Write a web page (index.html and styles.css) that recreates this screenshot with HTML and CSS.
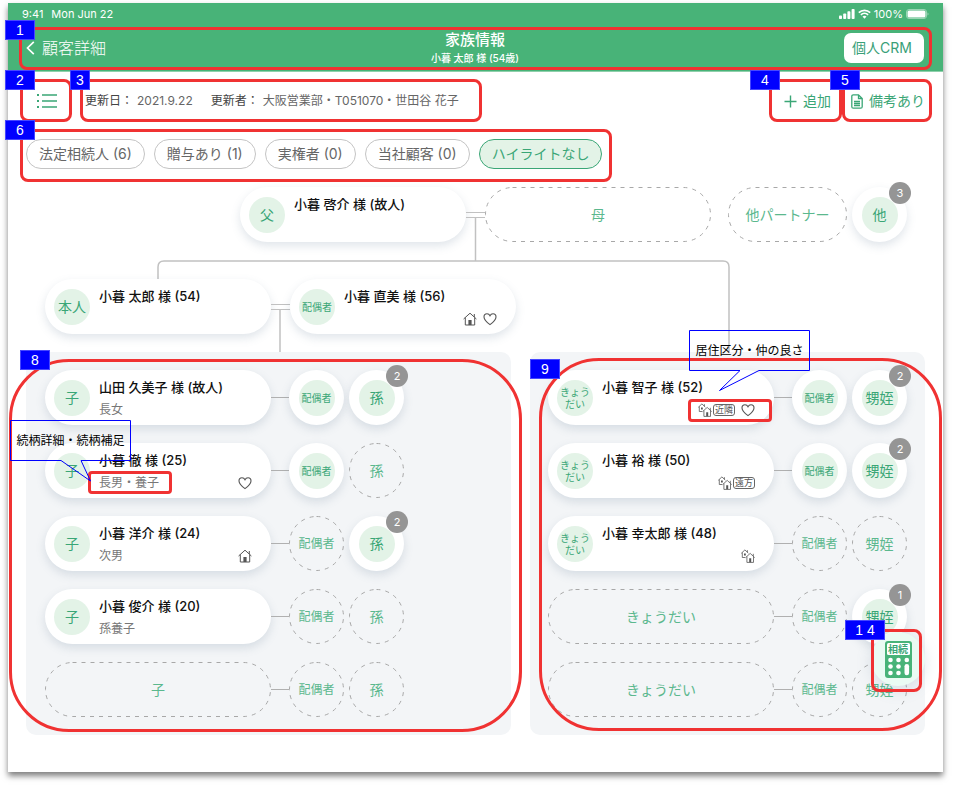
FILE: index.html
```html
<!DOCTYPE html>
<html lang="ja">
<head>
<meta charset="utf-8">
<meta name="viewport" content="width=device-width, initial-scale=1">
<title>家族情報</title>
<link rel="stylesheet" href="styles.css">
</head>
<body>
<svg class="sprite" aria-hidden="true">
  <symbol id="house" viewBox="0 0 14 14"><path d="M.6 7 7 1.200 13.400 7M2.300 5.600V13h9.400V5.600M11.300 5V2" fill="none" stroke="currentColor"/><path d="M5.400 8h3.200v5H5.400z" fill="currentColor"/></symbol>
  <symbol id="heart" viewBox="0 0 14 14"><path d="M7 12.600C3.600 10 1 7.700 1 4.900 1 3 2.300 1.700 4 1.700c1.300 0 2.400.7 3 2 .6-1.300 1.700-2 3-2 1.700 0 3 1.300 3 3.200 0 2.800-2.600 5.100-6 7.700z" fill="none" stroke="currentColor" stroke-width="1.100"/></symbol>
  <symbol id="houses" viewBox="0 0 14 14"><path d="M.3 4.300 3.900.9l3.400 3.200M1.300 3.500v5h3M6.400 3.300V1.200M4.600 8.600l4.600-4.200 4.500 4.200M5.900 7.500v5.900h6.600V7.500M12.300 7V4.800" fill="none" stroke="currentColor" stroke-width=".8"/><path d="M3 4.600h1.800v1.900H3zM8.200 9.200h2v4h-2z" fill="currentColor"/></symbol>
</svg>
<main class="screen">
  <header class="header">
    <div class="status">
      <span class="status-time"><span>9:41</span><span>Mon Jun 22</span></span>
      <span class="status-right">
        <svg width="16" height="10" viewBox="0 0 16 10" fill="#fff"><rect y="6.500" width="3" height="3.500" rx=".8"/><rect x="4.200" y="4.500" width="3" height="5.500" rx=".8"/><rect x="8.400" y="2.300" width="3" height="7.700" rx=".8"/><rect x="12.600" width="3" height="10" rx=".8"/></svg>
        <svg width="13" height="10" viewBox="0 0 13 10" fill="none" stroke="#fff" stroke-width="1.700"><path d="M.8 3.600a8.200 8.200 0 0 1 11.400 0M2.900 5.900a5.200 5.200 0 0 1 7.200 0"/><path d="M4.500 7.600a3 3 0 0 1 4 0L6.500 9.700z" fill="#fff" stroke="none"/></svg>
        <span>100%</span>
        <svg width="23" height="10" viewBox="0 0 23 10"><rect x=".5" y=".5" width="20" height="9" rx="2.500" fill="none" stroke="#9ad5b4"/><rect x="1.500" y="1.500" width="18" height="7" rx="1.500" fill="#fff"/><path d="M21.500 3.500v3q1-.4 1-1.500t-1-1.500" fill="#9ad5b4"/></svg>
      </span>
    </div>
    <nav class="nav">
      <button class="back"><svg width="9" height="14" viewBox="0 0 9 14" fill="none" stroke="#fff" stroke-width="1.700"><path d="M7.800.8 1.500 7l6.300 6.200"/></svg>顧客詳細</button>
      <div class="heading"><h1>家族情報</h1><p>小暮 太郎 様 (54歳)</p></div>
      <button class="crm">個人CRM</button>
    </nav>
  </header>

  <section class="toolbar">
    <button class="list" aria-label="一覧"><svg width="20" height="16" viewBox="0 0 20 16" stroke="currentColor" stroke-width="1.500" fill="none"><path d="M5 2h15M5 8h15M5 14h15"/><path d="M0 2h2M0 8h2M0 14h2" stroke-width="2"/></svg></button>
    <dl class="meta">
      <div><dt>更新日：</dt><dd>2021.9.22</dd></div>
      <div><dt>更新者：</dt><dd>大阪営業部・T051070・世田谷 花子</dd></div>
    </dl>
    <button class="action"><svg width="13" height="13" viewBox="0 0 13 13" stroke="currentColor" stroke-width="1.400"><path d="M6.500.5v12M.5 6.500h12"/></svg>追加</button>
    <button class="action action-note"><svg width="12" height="15" viewBox="0 0 12 15" fill="none" stroke="currentColor" stroke-width="1.300"><path d="M7.500.8H2.300Q.8.8.8 2.300v10.400q0 1.500 1.500 1.500h7.400q1.500 0 1.500-1.500V4.500zV4.500h3.700M3 7.500h6M3 9.500h6M3 11.500h6"/></svg>備考あり</button>
  </section>

  <section class="chips">
    <button class="chip">法定相続人 (6)</button>
    <button class="chip">贈与あり (1)</button>
    <button class="chip">実権者 (0)</button>
    <button class="chip">当社顧客 (0)</button>
    <button class="chip chip-on">ハイライトなし</button>
  </section>

  <section class="tree">
    <svg class="lines" width="899" height="165" fill="none" stroke="#c1c1c1" stroke-width="1.500"><path d="M132 92V80q0-6 6-6H697q6 0 6 6v85M449.500 30v44M254 122v43"/></svg>
    <div class="row row-parents">
      <div class="row">
        <button class="card"><span class="avatar">父</span><span class="body"><b>小暮 啓介 様 (故人)</b></span></button>
        <span class="tie"></span>
        <button class="empty"><svg class="dash"><rect rx="27"/></svg>母</button>
      </div>
      <div class="row row-gap">
        <button class="empty empty-partner"><svg class="dash"><rect rx="27"/></svg>他パートナー</button>
        <button class="round"><span class="avatar">他</span><span class="badge">3</span></button>
      </div>
    </div>
    <div class="row row-self">
      <button class="card"><span class="avatar">本人</span><span class="body"><b>小暮 太郎 様 (54)</b></span></button>
      <span class="tie"></span>
      <button class="card"><span class="avatar avatar-small">配偶者</span><span class="body"><b>小暮 直美 様 (56)</b><span class="detail"><span class="icons"><svg><use href="#house"/></svg><svg><use href="#heart"/></svg></span></span></span></button>
    </div>
  </section>

  <section class="panels">
    <div class="panel panel-children">
      <div class="row">
        <button class="card"><span class="avatar">子</span><span class="body"><b>山田 久美子 様 (故人)</b><span class="detail">長女</span></span></button>
        <span class="link"></span>
        <button class="round"><span class="avatar avatar-small">配偶者</span></button>
        <button class="round"><span class="avatar">孫</span><span class="badge">2</span></button>
      </div>
      <div class="row">
        <button class="card"><span class="avatar">子</span><span class="body"><b>小暮 徹 様 (25)</b><span class="detail">長男・養子<span class="icons"><svg><use href="#heart"/></svg></span></span></span></button>
        <span class="link"></span>
        <button class="round"><span class="avatar avatar-small">配偶者</span></button>
        <button class="empty empty-round"><svg class="dash"><rect rx="27"/></svg>孫</button>
      </div>
      <div class="row">
        <button class="card"><span class="avatar">子</span><span class="body"><b>小暮 洋介 様 (24)</b><span class="detail">次男<span class="icons"><svg><use href="#house"/></svg></span></span></span></button>
        <span class="link"></span>
        <button class="empty empty-round empty-spouse"><svg class="dash"><rect rx="27"/></svg>配偶者</button>
        <button class="round"><span class="avatar">孫</span><span class="badge">2</span></button>
      </div>
      <div class="row">
        <button class="card"><span class="avatar">子</span><span class="body"><b>小暮 俊介 様 (20)</b><span class="detail">孫養子</span></span></button>
        <span class="link"></span>
        <button class="empty empty-round empty-spouse"><svg class="dash"><rect rx="27"/></svg>配偶者</button>
        <button class="empty empty-round"><svg class="dash"><rect rx="27"/></svg>孫</button>
      </div>
      <div class="row">
        <button class="empty"><svg class="dash"><rect rx="27"/></svg>子</button>
        <span class="link"></span>
        <button class="empty empty-round empty-spouse"><svg class="dash"><rect rx="27"/></svg>配偶者</button>
        <button class="empty empty-round"><svg class="dash"><rect rx="27"/></svg>孫</button>
      </div>
      <span class="mark mark-8"></span><span class="tag tag-8">8</span>
      <span class="mark mark-small mark-relation"></span>
      <div class="callout callout-relation"><svg width="121" height="62"><path d="M.5.500h120v40H71l9.500 20.500L51 40.500H.5z"/></svg><span>続柄詳細・続柄補足</span></div>
    </div>

    <div class="panel panel-siblings">
      <div class="row">
        <button class="card"><span class="avatar avatar-small">きょう<br>だい</span><span class="body"><b>小暮 智子 様 (52)</b><span class="detail"><span class="icons"><svg><use href="#houses"/></svg><i>近隣</i><svg><use href="#heart"/></svg></span></span></span></button>
        <span class="link"></span>
        <button class="round"><span class="avatar avatar-small">配偶者</span></button>
        <button class="round"><span class="avatar">甥姪</span><span class="badge">2</span></button>
      </div>
      <div class="row">
        <button class="card"><span class="avatar avatar-small">きょう<br>だい</span><span class="body"><b>小暮 裕 様 (50)</b><span class="detail"><span class="icons"><svg><use href="#houses"/></svg><i>遠方</i></span></span></span></button>
        <span class="link"></span>
        <button class="round"><span class="avatar avatar-small">配偶者</span></button>
        <button class="round"><span class="avatar">甥姪</span><span class="badge">2</span></button>
      </div>
      <div class="row">
        <button class="card"><span class="avatar avatar-small">きょう<br>だい</span><span class="body"><b>小暮 幸太郎 様 (48)</b><span class="detail"><span class="icons"><svg><use href="#houses"/></svg></span></span></span></button>
        <span class="link"></span>
        <button class="empty empty-round empty-spouse"><svg class="dash"><rect rx="27"/></svg>配偶者</button>
        <button class="empty empty-round"><svg class="dash"><rect rx="27"/></svg>甥姪</button>
      </div>
      <div class="row">
        <button class="empty"><svg class="dash"><rect rx="27"/></svg>きょうだい</button>
        <span class="link"></span>
        <button class="empty empty-round empty-spouse"><svg class="dash"><rect rx="27"/></svg>配偶者</button>
        <button class="round"><span class="avatar">甥姪</span><span class="badge">1</span></button>
      </div>
      <div class="row">
        <button class="empty"><svg class="dash"><rect rx="27"/></svg>きょうだい</button>
        <span class="link"></span>
        <button class="empty empty-round empty-spouse"><svg class="dash"><rect rx="27"/></svg>配偶者</button>
        <button class="empty empty-round"><svg class="dash"><rect rx="27"/></svg>甥姪</button>
      </div>
      <span class="mark mark-9"></span><span class="tag tag-9">9</span>
      <span class="mark mark-small mark-icons"></span>
      <div class="callout callout-icons"><svg width="121" height="62"><path d="M.5.500h120v40H70L30.500 60.500 51 40.500H.5z"/></svg><span>居住区分・仲の良さ</span></div>
    </div>
  </section>

  <button class="fab"><svg width="27" height="37" viewBox="0 0 27 37"><rect width="27" height="37" rx="3" fill="#48b378"/><rect x="2" y="2" width="23" height="12" rx="1.500" fill="#fff"/><g fill="#fff"><circle cx="5.500" cy="19" r="2.300"/><circle cx="13.500" cy="19" r="2.300"/><circle cx="21.800" cy="19" r="2.300"/><circle cx="5.500" cy="25.500" r="2.300"/><circle cx="13.500" cy="25.500" r="2.300"/><circle cx="5.500" cy="32" r="2.300"/><circle cx="13.500" cy="32" r="2.300"/><rect x="19.500" y="23" width="4.600" height="11.300" rx="2.300"/></g></svg><span>相続</span></button>

  <span class="mark mark-1"></span><span class="tag tag-1">1</span>
  <span class="mark mark-2"></span><span class="tag tag-2">2</span>
  <span class="mark mark-3"></span><span class="tag tag-3">3</span>
  <span class="mark mark-4"></span><span class="mark mark-5"></span>
  <span class="tag tag-4">4</span><span class="tag tag-5">5</span>
  <span class="mark mark-6"></span><span class="tag tag-6">6</span>
  <span class="mark mark-14"></span><span class="tag tag-14">1 4</span>
</main>
</body>
</html>
```
FILE: styles.css
```css
* { box-sizing: border-box; }
body {
  margin: 0;
  padding: 3px 10px 15px 8px;
  background: #fff;
  color: #111;
  font: 14px/20px Inter, "Noto Sans CJK JP", sans-serif;
}
button {
  margin: 0;
  padding: 0;
  border: 0;
  background: none;
  color: inherit;
  font: inherit;
  cursor: pointer;
}
h1, p, dl, dd { margin: 0; }
svg { display: block; flex: none; }
.sprite { position: absolute; width: 0; height: 0; }

.screen {
  position: relative;
  padding-bottom: 37px;
  background: #fff;
  box-shadow: 0 4px 6px rgba(0, 0, 0, .5);
}

/* Header */
.header { background: #48b378; color: #fff; border-bottom: 1px solid #8fd0ab; }
.status {
  display: flex;
  justify-content: space-between;
  align-items: center;
  height: 24px;
  padding: 0 14px 2px;
  font-size: 11px;
}
.status-time { display: flex; gap: 8px; }
.status-right { display: flex; align-items: center; gap: 3px; }
.nav {
  display: grid;
  grid-template-columns: 1fr auto 1fr;
  align-items: center;
  height: 44px;
  padding: 0 19px 2px 18px;
}
.back { display: flex; align-items: center; gap: 7px; justify-self: start; font-size: 16px; font-weight: 300; }
.heading { text-align: center; font-weight: 500; }
.heading h1 { font-size: 15px; line-height: 20px; font-weight: 500; }
.heading p { font-size: 10px; line-height: 16px; }
.crm {
  justify-self: end;
  height: 30px;
  padding: 0 12px 0 8px;
  border-radius: 7px;
  background: #fff;
  color: #3a9f78;
}

/* Toolbar */
.toolbar {
  display: flex;
  align-items: center;
  height: 58px;
  padding: 0 18px 0 29px;
  color: #3aa676;
}
.meta { display: flex; gap: 18px; margin: 0 auto 0 28px; font-size: 12px; color: #666; }
.meta div { display: flex; gap: 4px; }
.meta dt { color: #444; }
.action { display: flex; align-items: center; gap: 6px; }
.action-note { margin-left: 20px; }

/* Filter chips */
.chips { display: flex; gap: 9px; padding: 9px 18px 18px; }
.chip {
  height: 30px;
  padding: 0 12px;
  border: 1px solid #c4c4c4;
  border-radius: 15px;
  color: #666;
}
.chip-on { border-color: #3aa676; background: #e3f3e7; color: #3aa676; }

/* Family tree */
.tree { position: relative; margin: 0 18px; }
.lines { position: absolute; top: 0; left: 0; }
.row { position: relative; display: flex; align-items: center; }
.row-parents { justify-content: flex-end; gap: 17px; padding-right: 18px; }
.row-gap { gap: 5px; }
.row-self { padding: 37px 19px 18px; }
.tie { width: 19px; height: 6px; border: solid #c1c1c1; border-width: 1px 0; }
.link { width: 18px; height: 1px; background: #b0b0b0; }
.round + .round, .round + .empty-round, .empty-round + .round, .empty-round + .empty-round { margin-left: 5px; }

.card, .round { background: #fff; box-shadow: 0 4px 10px rgba(100, 125, 150, .2); }
.card {
  display: flex;
  align-items: center;
  gap: 9px;
  width: 226px;
  height: 55px;
  padding: 0 9px;
  border-radius: 28px;
  text-align: left;
}
.round {
  position: relative;
  display: grid;
  place-items: center;
  width: 55px;
  height: 55px;
  border-radius: 50%;
}
.avatar {
  display: grid;
  flex: none;
  place-items: center;
  align-content: center;
  width: 36px;
  height: 36px;
  border-radius: 50%;
  background: #e3f3e7;
  color: #3aa676;
  text-align: center;
  white-space: nowrap;
}
.avatar-small { display: flex; align-items: center; justify-content: center; font-size: 10px; line-height: 12px; }
.badge {
  position: absolute;
  top: -5px;
  right: -4px;
  width: 22px;
  height: 22px;
  border-radius: 50%;
  background: #959595;
  color: #fff;
  font-size: 11px;
  line-height: 22px;
}
.body { flex: 1; height: 55px; padding: 8px 10px 0 0; }
.body b { display: block; font-size: 13px; line-height: 18px; font-weight: 500; white-space: nowrap; }
.detail {
  display: flex;
  align-items: center;
  height: 16px;
  margin-top: 6px;
  color: #777;
  font-size: 12px;
}
.icons { display: flex; align-items: center; gap: 6px; margin-left: auto; color: #555; }
.icons svg { width: 14px; height: 14px; }
.icons i {
  margin-left: -5px;
  padding: 0 1px;
  border: 1px solid #666;
  border-radius: 3px;
  font-size: 9px;
  line-height: 10px;
  font-style: normal;
}
.empty {
  position: relative;
  width: 226px;
  height: 55px;
  color: #5bb88e;
}
.empty-partner { width: 119px; }
.empty-round { width: 55px; }
.empty-spouse { font-size: 12px; }
.dash { position: absolute; top: 0; left: 0; width: 100%; height: 100%; }
.dash rect {
  x: 0.5px;
  y: 0.5px;
  width: calc(100% - 1px);
  height: calc(100% - 1px);
  fill: none;
  stroke: #a8a8a8;
  stroke-dasharray: 4 5;
}

/* Children and siblings */
.panels { display: flex; gap: 19px; margin: 0 18px; }
.panel {
  position: relative;
  display: flex;
  flex-direction: column;
  gap: 18px;
  padding: 18px;
  border-radius: 10px;
  background: #f3f5f7;
}
.panel-children { flex: 1; padding-left: 19px; }

/* Inheritance calculator */
.fab {
  position: absolute;
  right: 18px;
  bottom: 86px;
  display: grid;
  place-items: center;
  width: 54px;
  height: 54px;
  border-radius: 50%;
  background: #eafbf3;
  box-shadow: 0 4px 16px rgba(100, 125, 150, .2);
}
.fab > * { grid-area: 1 / 1; }
.fab span { position: relative; margin-bottom: 21px; color: #3aa676; font-size: 10px; line-height: 12px; font-weight: 700; }

/* Numbered annotations */
.mark, .tag, .callout { position: absolute; pointer-events: none; }
.mark { border: 3px solid #f03232; border-radius: 8px; }
.mark-small { width: 84px; height: 23px; border-radius: 4px; }
.tag {
  width: 30px;
  height: 20px;
  border: 1px solid #4646ff;
  background: #00f;
  color: #fff;
  font: 14px/18px "Liberation Sans", sans-serif;
  text-align: center;
}
.mark-1 { top: 24px; left: 11px; right: 11px; height: 43px; }
.mark-2, .mark-3, .mark-4, .mark-5 { top: 76px; height: 43px; }
.mark-2 { left: 12px; width: 52px; }
.mark-3 { left: 72px; width: 402px; }
.mark-4 { right: 101px; width: 73px; }
.mark-5 { right: 11px; width: 90px; }
.mark-6 { top: 126px; left: 12px; width: 592px; height: 53px; }
.mark-8 { top: 7px; left: -17px; right: -11px; bottom: 3px; border-radius: 60px; }
.mark-9 { top: 6px; left: 9px; right: -17px; bottom: 4px; border-radius: 60px; }
.mark-14 { right: 21px; bottom: 80px; width: 51px; height: 63px; }
.mark-relation { top: 119px; left: 62px; }
.mark-icons { top: 47px; left: 158px; }
.tag-1 { top: 17px; left: -3px; }
.tag-2 { top: 67px; left: -3px; }
.tag-3 { top: 67px; left: 62px; width: 20px; }
.tag-4 { top: 67px; right: 163px; }
.tag-5 { top: 67px; right: 83px; }
.tag-6 { top: 117px; left: -3px; }
.tag-8 { top: -2px; left: -6px; }
.tag-9 { top: 7px; left: 0; }
.tag-14 { right: 58px; bottom: 132px; width: 40px; }
.callout { width: 121px; color: #000; font-size: 12px; line-height: 41px; text-align: center; }
.callout svg { position: absolute; top: 0; left: 0; fill: none; stroke: #00f; }
.callout-relation { top: 68px; left: -16px; }
.callout-icons { top: -22px; left: 159px; }
```
